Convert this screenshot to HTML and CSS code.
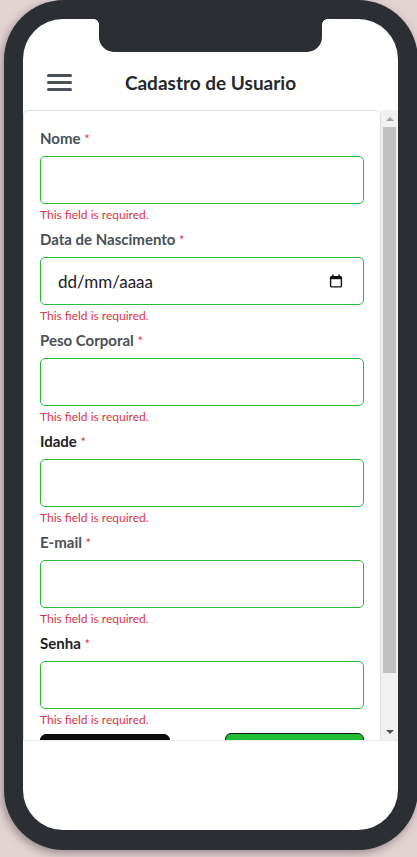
FILE: index.html
```html
<!DOCTYPE html>
<html lang="pt">
<head>
<meta charset="utf-8">
<title>Cadastro de Usuario</title>
<link rel="stylesheet" href="styles.css">
</head>
<body>
<div class="phone">
  <div class="screen">
    <div class="notch"></div>
    <header class="header">
      <div class="menu"><span></span><span></span><span></span></div>
      <h1 class="title">Cadastro de Usuario</h1>
      <div class="spacer"></div>
    </header>
    <div class="scroller">
      <form class="card">
        <div class="field">
          <label class="label">Nome <span class="req">*</span></label>
          <div class="control"><input class="input" type="text"></div>
          <div class="error">This field is required.</div>
        </div>
        <div class="field">
          <label class="label">Data de Nascimento <span class="req">*</span></label>
          <div class="control">
            <input class="input date" type="text" placeholder="dd/mm/aaaa">
            <svg class="cal" width="14" height="14" viewBox="0 0 14 14">
              <rect x="1.6" y="2.6" width="10.8" height="10.3" rx="1.2" fill="none" stroke="#111" stroke-width="1.4"/>
              <rect x="1.6" y="2.6" width="10.8" height="2.6" fill="#111"/>
              <rect x="3.2" y="0.6" width="1.5" height="2.6" fill="#111"/>
              <rect x="9.3" y="0.6" width="1.5" height="2.6" fill="#111"/>
            </svg>
          </div>
          <div class="error">This field is required.</div>
        </div>
        <div class="field">
          <label class="label">Peso Corporal <span class="req">*</span></label>
          <div class="control"><input class="input" type="text"></div>
          <div class="error">This field is required.</div>
        </div>
        <div class="field">
          <label class="label dark">Idade <span class="req">*</span></label>
          <div class="control"><input class="input" type="text"></div>
          <div class="error">This field is required.</div>
        </div>
        <div class="field">
          <label class="label">E-mail <span class="req">*</span></label>
          <div class="control"><input class="input" type="text"></div>
          <div class="error">This field is required.</div>
        </div>
        <div class="field">
          <label class="label dark">Senha <span class="req">*</span></label>
          <div class="control"><input class="input" type="password"></div>
          <div class="error">This field is required.</div>
        </div>
        <div class="actions">
          <button class="btn btn-dark" type="button">Voltar</button>
          <button class="btn btn-green" type="button">Cadastrar</button>
        </div>
      </form>
      <div class="scrollbar">
        <div class="sb-btn"><span class="arrow up"></span></div>
        <div class="sb-track"><div class="sb-thumb"></div></div>
        <div class="sb-btn"><span class="arrow down"></span></div>
      </div>
    </div>
    <footer class="footer"></footer>
  </div>
</div>
</body>
</html>
```
FILE: styles.css
```css
html, body {
  margin: 0;
  padding: 0;
  overflow: hidden;
  height: 100%;
}
body {
  background: #e2d3d3;
  font-family: Lato, "Noto Sans", sans-serif;
}
.phone {
  box-sizing: border-box;
  width: 414px;
  height: 850px;
  margin-left: 4px;
  padding: 19px 20px 20px 19px;
  background: #2b2f33;
  border-radius: 60px;
  box-shadow: -2px 3px 8px rgba(60, 50, 50, 0.45);
}
.screen {
  position: relative;
  height: 100%;
  background: #fff;
  border-radius: 40px;
  overflow: hidden;
  display: flex;
  flex-direction: column;
}
.notch {
  position: absolute;
  top: -19px;
  left: 76px;
  width: 223px;
  height: 52px;
  background: #2b2f33;
  border-radius: 0 0 15px 15px;
}
.notch::before,
.notch::after {
  content: "";
  position: absolute;
  top: 19px;
  width: 5px;
  height: 5px;
}
.notch::before {
  left: -5px;
  background: radial-gradient(circle at 0 100%, transparent 4.5px, #2b2f33 5px);
}
.notch::after {
  right: -5px;
  background: radial-gradient(circle at 100% 100%, transparent 4.5px, #2b2f33 5px);
}
.header {
  box-sizing: border-box;
  height: 91px;
  padding: 35px 24px 0 24px;
  display: grid;
  grid-template-columns: 1fr auto 1fr;
  align-items: center;
  align-content: start;
  grid-auto-rows: 56px;
}
.menu {
  display: flex;
  flex-direction: column;
  gap: 4px;
  width: 25px;
}
.menu span {
  display: block;
  height: 3px;
  background: #495057;
  border-radius: 1.5px;
}
.title {
  margin: 0;
  font-size: 19px;
  font-weight: 700;
  color: #25282c;
  white-space: nowrap;
}
.scroller {
  height: 630px;
  display: flex;
  flex-shrink: 0;
}
.card {
  flex: 1;
  margin: 0;
  border: 1px solid #dee2e6;
  border-bottom: none;
  border-radius: 5px 5px 0 0;
  padding: 16px 16px 0 16px;
  overflow: hidden;
}
.field {
  margin-bottom: 4px;
}
.label {
  display: block;
  height: 22px;
  font-size: 15px;
  line-height: 22px;
  font-weight: 700;
  color: #495057;
  margin-bottom: 7px;
}
.label.dark {
  color: #1d2024;
}
.req {
  color: #dc3545;
  font-weight: 400;
  font-size: 13px;
  line-height: 1;
}
.control {
  box-sizing: border-box;
  height: 48px;
  border: 1px solid #20c037;
  border-radius: 5px;
  display: flex;
  align-items: center;
  padding: 0 20px 0 17px;
}
.input {
  flex: 1;
  min-width: 0;
  border: none;
  outline: none;
  padding: 0;
  background: transparent;
  font-family: Lato, "Noto Sans", sans-serif;
  font-size: 17px;
  color: #212529;
}
.input.date::placeholder {
  color: #1d2024;
  opacity: 1;
}
.cal {
  display: block;
  flex-shrink: 0;
}
.error {
  height: 18px;
  padding-top: 2px;
  font-size: 12px;
  line-height: 18px;
  color: #dc3545;
}
.actions {
  display: flex;
  justify-content: space-between;
  align-items: flex-start;
}
.btn {
  box-sizing: border-box;
  height: 40px;
  border-radius: 6px;
  font-family: Lato, sans-serif;
  font-size: 16px;
  color: #fff;
}
.btn-dark {
  width: 130px;
  margin-top: 1px;
  background: #0d0d0d;
  border: 1px solid #0d0d0d;
}
.btn-green {
  width: 139px;
  background: #1ebd35;
  border: 1px solid #151515;
}
.scrollbar {
  width: 17px;
  flex-shrink: 0;
  background: #f1f1f1;
  display: flex;
  flex-direction: column;
}
.sb-btn {
  height: 17px;
  display: flex;
  align-items: center;
  justify-content: center;
}
.arrow {
  width: 0;
  height: 0;
  border-left: 4px solid transparent;
  border-right: 4px solid transparent;
}
.arrow.up {
  border-bottom: 4px solid #a3a3a3;
}
.arrow.down {
  border-top: 4px solid #505050;
}
.sb-track {
  flex: 1;
  padding: 0 2px;
}
.sb-thumb {
  height: 546px;
  background: #c1c1c1;
}
.footer {
  flex: 1;
  border-top: 1px solid #e9ecef;
}
```
